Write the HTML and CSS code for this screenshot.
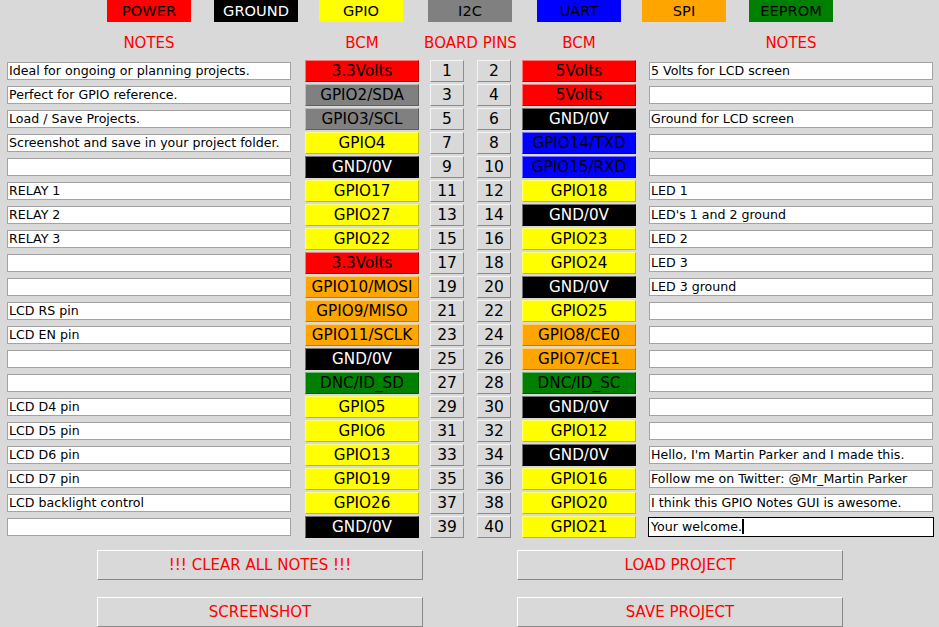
FILE: index.html
```html
<!DOCTYPE html>
<html>
<head>
<meta charset="utf-8">
<title>GPIO Notes</title>
<link rel="stylesheet" href="styles.css">
</head>
<body>
<div class="legend">
  <div class="key red">POWER</div>
  <div class="key black">GROUND</div>
  <div class="key yellow">GPIO</div>
  <div class="key gray">I2C</div>
  <div class="key blue">UART</div>
  <div class="key orange">SPI</div>
  <div class="key green">EEPROM</div>
</div>
<div class="head">
  <div class="h h-note">NOTES</div>
  <div class="h h-bcm">BCM</div>
  <div class="h h-pins">BOARD PINS</div>
  <div class="h h-bcm h-r">BCM</div>
  <div class="h h-note h-nr">NOTES</div>
</div>
<div class="rows">
  <div class="row"><div class="cell note"><div class="entry">Ideal for ongoing or planning projects.</div></div><div class="bcm red">3.3Volts</div><div class="pin">1</div><div class="pin r">2</div><div class="bcm r red">5Volts</div><div class="cell note r"><div class="entry">5 Volts for LCD screen</div></div></div>
  <div class="row"><div class="cell note"><div class="entry">Perfect for GPIO reference.</div></div><div class="bcm gray">GPIO2/SDA</div><div class="pin">3</div><div class="pin r">4</div><div class="bcm r red">5Volts</div><div class="cell note r"><div class="entry"></div></div></div>
  <div class="row"><div class="cell note"><div class="entry">Load / Save Projects.</div></div><div class="bcm gray">GPIO3/SCL</div><div class="pin">5</div><div class="pin r">6</div><div class="bcm r black">GND/0V</div><div class="cell note r"><div class="entry">Ground for LCD screen</div></div></div>
  <div class="row"><div class="cell note"><div class="entry">Screenshot and save in your project folder.</div></div><div class="bcm yellow">GPIO4</div><div class="pin">7</div><div class="pin r">8</div><div class="bcm r blue">GPIO14/TXD</div><div class="cell note r"><div class="entry"></div></div></div>
  <div class="row"><div class="cell note"><div class="entry"></div></div><div class="bcm black">GND/0V</div><div class="pin">9</div><div class="pin r">10</div><div class="bcm r blue">GPIO15/RXD</div><div class="cell note r"><div class="entry"></div></div></div>
  <div class="row"><div class="cell note"><div class="entry">RELAY 1</div></div><div class="bcm yellow">GPIO17</div><div class="pin">11</div><div class="pin r">12</div><div class="bcm r yellow">GPIO18</div><div class="cell note r"><div class="entry">LED 1</div></div></div>
  <div class="row"><div class="cell note"><div class="entry">RELAY 2</div></div><div class="bcm yellow">GPIO27</div><div class="pin">13</div><div class="pin r">14</div><div class="bcm r black">GND/0V</div><div class="cell note r"><div class="entry">LED's 1 and 2 ground</div></div></div>
  <div class="row"><div class="cell note"><div class="entry">RELAY 3</div></div><div class="bcm yellow">GPIO22</div><div class="pin">15</div><div class="pin r">16</div><div class="bcm r yellow">GPIO23</div><div class="cell note r"><div class="entry">LED 2</div></div></div>
  <div class="row"><div class="cell note"><div class="entry"></div></div><div class="bcm red">3.3Volts</div><div class="pin">17</div><div class="pin r">18</div><div class="bcm r yellow">GPIO24</div><div class="cell note r"><div class="entry">LED 3</div></div></div>
  <div class="row"><div class="cell note"><div class="entry"></div></div><div class="bcm orange">GPIO10/MOSI</div><div class="pin">19</div><div class="pin r">20</div><div class="bcm r black">GND/0V</div><div class="cell note r"><div class="entry">LED 3 ground</div></div></div>
  <div class="row"><div class="cell note"><div class="entry">LCD RS pin</div></div><div class="bcm orange">GPIO9/MISO</div><div class="pin">21</div><div class="pin r">22</div><div class="bcm r yellow">GPIO25</div><div class="cell note r"><div class="entry"></div></div></div>
  <div class="row"><div class="cell note"><div class="entry">LCD EN pin</div></div><div class="bcm orange">GPIO11/SCLK</div><div class="pin">23</div><div class="pin r">24</div><div class="bcm r orange">GPIO8/CE0</div><div class="cell note r"><div class="entry"></div></div></div>
  <div class="row"><div class="cell note"><div class="entry"></div></div><div class="bcm black">GND/0V</div><div class="pin">25</div><div class="pin r">26</div><div class="bcm r orange">GPIO7/CE1</div><div class="cell note r"><div class="entry"></div></div></div>
  <div class="row"><div class="cell note"><div class="entry"></div></div><div class="bcm green">DNC/ID_SD</div><div class="pin">27</div><div class="pin r">28</div><div class="bcm r green">DNC/ID_SC</div><div class="cell note r"><div class="entry"></div></div></div>
  <div class="row"><div class="cell note"><div class="entry">LCD D4 pin</div></div><div class="bcm yellow">GPIO5</div><div class="pin">29</div><div class="pin r">30</div><div class="bcm r black">GND/0V</div><div class="cell note r"><div class="entry"></div></div></div>
  <div class="row"><div class="cell note"><div class="entry">LCD D5 pin</div></div><div class="bcm yellow">GPIO6</div><div class="pin">31</div><div class="pin r">32</div><div class="bcm r yellow">GPIO12</div><div class="cell note r"><div class="entry"></div></div></div>
  <div class="row"><div class="cell note"><div class="entry">LCD D6 pin</div></div><div class="bcm yellow">GPIO13</div><div class="pin">33</div><div class="pin r">34</div><div class="bcm r black">GND/0V</div><div class="cell note r"><div class="entry">Hello, I'm Martin Parker and I made this.</div></div></div>
  <div class="row"><div class="cell note"><div class="entry">LCD D7 pin</div></div><div class="bcm yellow">GPIO19</div><div class="pin">35</div><div class="pin r">36</div><div class="bcm r yellow">GPIO16</div><div class="cell note r"><div class="entry">Follow me on Twitter: @Mr_Martin Parker</div></div></div>
  <div class="row"><div class="cell note"><div class="entry">LCD backlight control</div></div><div class="bcm yellow">GPIO26</div><div class="pin">37</div><div class="pin r">38</div><div class="bcm r yellow">GPIO20</div><div class="cell note r"><div class="entry">I think this GPIO Notes GUI is awesome.</div></div></div>
  <div class="row"><div class="cell note"><div class="entry"></div></div><div class="bcm black">GND/0V</div><div class="pin">39</div><div class="pin r">40</div><div class="bcm r yellow">GPIO21</div><div class="cell note r focus"><div class="entry">Your welcome.<span class="caret"></span></div></div></div>
</div>
<div class="buttons">
  <div class="btn">!!! CLEAR ALL NOTES !!!</div>
  <div class="btn">LOAD PROJECT</div>
  <div class="btn">SCREENSHOT</div>
  <div class="btn">SAVE PROJECT</div>
</div>
</body>
</html>
```
FILE: styles.css
```css
html, body {
  margin: 0;
  padding: 0;
  background: #d9d9d9;
  width: 939px;
  height: 627px;
  overflow: hidden;
  font-family: "DejaVu Sans", sans-serif;
}

.legend {
  display: flex;
  height: 22px;
  padding-left: 107px;
}
.key {
  width: 84px;
  height: 22px;
  line-height: 22px;
  text-align: center;
  font-size: 14.6px;
  color: #000;
}
.key:nth-child(2) { margin-left: 23px; }
.key:nth-child(3) { margin-left: 21px; }
.key:nth-child(4) { margin-left: 25px; }
.key:nth-child(5) { margin-left: 25px; }
.key:nth-child(6) { margin-left: 21px; }
.key:nth-child(7) { margin-left: 23px; }

.red { background: #ff0000; }
.black { background: #000000; color: #ffffff !important; }
.yellow { background: #ffff00; }
.gray { background: #808080; }
.blue { background: #0000ff; }
.orange { background: #ffa500; }
.green { background: #008000; }

.head {
  display: flex;
  margin-top: 8px;
  height: 26px;
  line-height: 26px;
  margin-bottom: 4px;
  color: #ff0000;
  font-size: 15px;
}
.h {
  display: flex;
  justify-content: center;
  white-space: nowrap;
}
.h-note { width: 286px; margin-left: 6px; }
.h-bcm { width: 114px; margin-left: 13px; }
.h-bcm.h-r { margin-left: 11px; }
.h-nr { margin-left: 12px; }
.h-pins { width: 81px; margin-left: 11px; }

.note { width: 286px; margin-left: 6px; }
.note.r { margin-left: 12px; }

.rows {
  display: flex;
  flex-direction: column;
  gap: 2px;
}
.row {
  display: flex;
  height: 22px;
}

.cell {
  display: flex;
  align-items: center;
}
.cell > .entry {
  box-sizing: border-box;
  width: 100%;
  height: 20px;
  border: 1px solid transparent;
}
.entry {
  background: #ffffff;
  box-shadow: inset 0 0 0 1px #a3a3a3;
  font-size: 12.6px;
  line-height: 18px;
  padding-left: 2px;
  color: #000;
  white-space: nowrap;
  overflow: hidden;
  background-clip: padding-box;
}
.focus > .entry {
  border-color: #000;
  box-shadow: none;
}
.caret {
  display: inline-block;
  width: 2px;
  height: 15px;
  background: #000;
  vertical-align: -3px;
}

.bcm {
  box-sizing: border-box;
  width: 114px;
  margin-left: 13px;
  height: 22px;
  line-height: 20px;
  text-align: center;
  font-size: 15.2px;
  color: #000;
  border: 1px solid;
  border-color: rgba(255,255,255,0.45) rgba(0,0,0,0.25) rgba(0,0,0,0.25) rgba(255,255,255,0.45);
  white-space: nowrap;
}
.bcm.r { margin-left: 11px; }
.pin {
  box-sizing: border-box;
  width: 34px;
  margin-left: 11px;
  height: 22px;
  line-height: 20px;
  text-align: center;
  font-size: 15.5px;
  color: #000;
  background: #d9d9d9;
  border: 1px solid;
  border-color: #f4f4f4 #8c8c8c #8c8c8c #f4f4f4;
}
.pin.r { margin-left: 13px; }

.buttons {
  display: grid;
  grid-template-columns: 326px 326px;
  column-gap: 94px;
  row-gap: 17px;
  padding-left: 97px;
  margin-top: 12px;
}
.btn {
  box-sizing: border-box;
  height: 30px;
  line-height: 28px;
  text-align: center;
  font-size: 15px;
  color: #ff0000;
  border: 1px solid;
  border-color: #ffffff #888888 #888888 #ffffff;
}
```
